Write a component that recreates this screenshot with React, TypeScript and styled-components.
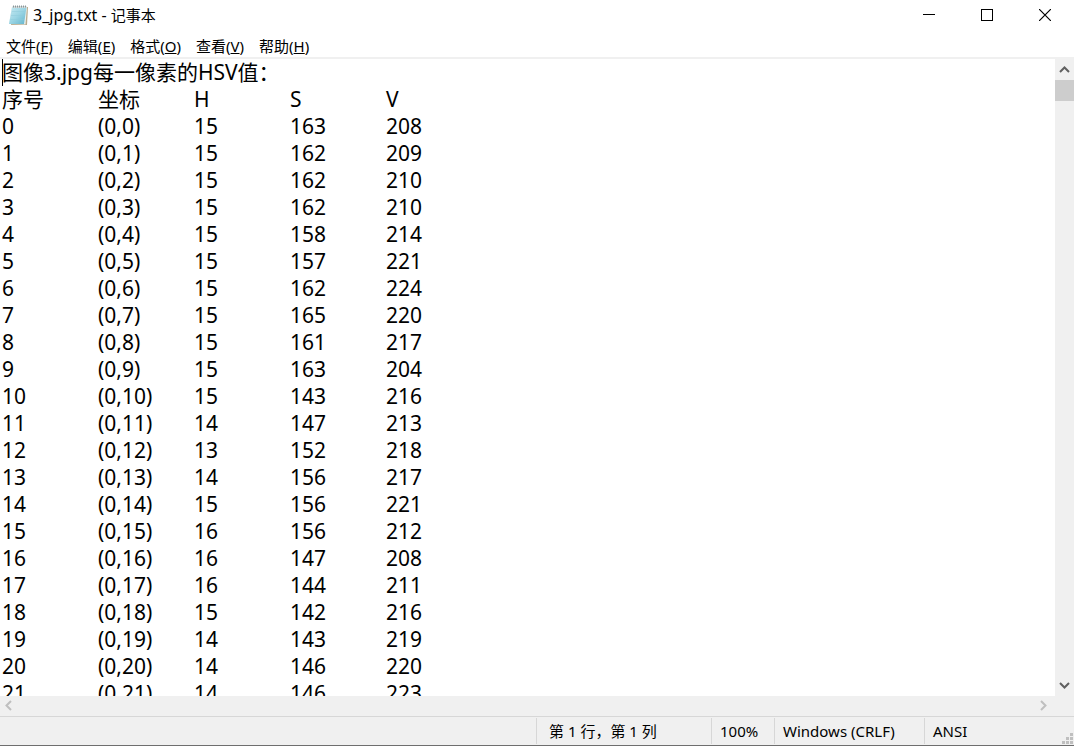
import React from "react";
import styled, { createGlobalStyle } from "styled-components";

const GlobalStyle = createGlobalStyle`
  * { box-sizing: border-box; }
  body {
    margin: 0;
    background: #fff;
    color: #000;
    font-family: "Noto Sans", "Noto Sans CJK SC", sans-serif;
    font-size: 15px;
  }
`;

const Window = styled.main`
  display: flex;
  flex-direction: column;
  height: 100vh;
  overflow: hidden;
  border-bottom: 1px solid #6e6e6e;
`;

const TitleBar = styled.header`
  display: flex;
  align-items: center;
  height: 29px;
  padding-left: 8px;
`;

const Title = styled.h1`
  flex: 1;
  margin: 0 0 0 4px;
  padding-top: 2px;
  font-size: 15px;
  font-weight: 400;
  line-height: 27px;
`;

const FileName = styled.span`
  font-size: 16px;
`;

const CaptionButton = styled.button`
  display: flex;
  align-items: center;
  justify-content: center;
  width: 58px;
  height: 29px;
  padding: 0;
  border: 0;
  background: transparent;
`;

const MenuBar = styled.nav`
  display: flex;
  height: 30px;
  padding-left: 6px;
  gap: 15px;
  border-bottom: 2px solid #f0f0f0;
`;

const MenuButton = styled.button`
  padding: 3px 0 0;
  border: 0;
  background: transparent;
  color: inherit;
  font: inherit;
  line-height: 28px;
  height: 28px;
  white-space: nowrap;
`;

const Middle = styled.div`
  display: flex;
  flex: 1;
  min-height: 0;
`;

const Editor = styled.div`
  position: relative;
  flex: 1;
  min-width: 0;
`;

const Caret = styled.span`
  position: absolute;
  left: 2px;
  top: 0;
  width: 1px;
  height: 27px;
  background: #000;
`;

const TextBox = styled.textarea`
  display: block;
  width: 100%;
  height: 100%;
  padding: 0 0 0 2px;
  border: 0;
  outline: 0;
  resize: none;
  overflow: hidden;
  white-space: pre;
  background: #fff;
  color: #000;
  font-family: inherit;
  font-size: 21px;
  line-height: 27px;
  tab-size: 96px;
`;

const VerticalBar = styled.div`
  display: flex;
  flex-direction: column;
  width: 19px;
  background: #f0f0f0;
`;

const HorizontalBar = styled.div`
  display: flex;
  justify-content: space-between;
  height: 20px;
  padding-right: 22px;
  background: #f0f0f0;
`;

const ArrowButton = styled.button<{ $muted?: boolean }>`
  display: flex;
  align-items: center;
  justify-content: center;
  width: ${(p) => (p.$muted ? 17 : 19)}px;
  height: ${(p) => (p.$muted ? 19 : 21)}px;
  padding: 0;
  border: 0;
  background: transparent;
  color: ${(p) => (p.$muted ? "#bfbfbf" : "#606060")};
`;

const Track = styled.div`
  flex: 1;
`;

const Thumb = styled.div`
  height: 21px;
  background: #cdcdcd;
`;

const StatusBar = styled.footer`
  position: relative;
  display: flex;
  height: 29px;
  padding: 1px 0;
  border-top: 1px solid #d7d7d7;
  background: #f0f0f0;
`;

const StatusSpacer = styled.div`
  flex: 1;
`;

const StatusCell = styled.div<{ $width: number; $inset?: number }>`
  width: ${(p) => p.$width}px;
  padding-left: ${(p) => p.$inset ?? 8}px;
  border-left: 1px solid #d7d7d7;
  line-height: 27px;
  white-space: nowrap;
`;

const Grip = styled.svg`
  position: absolute;
  right: 1px;
  bottom: 1px;
`;

const hsv = [
  [15, 163, 208], [15, 162, 209], [15, 162, 210], [15, 162, 210], [15, 158, 214],
  [15, 157, 221], [15, 162, 224], [15, 165, 220], [15, 161, 217], [15, 163, 204],
  [15, 143, 216], [14, 147, 213], [13, 152, 218], [14, 156, 217], [15, 156, 221],
  [16, 156, 212], [16, 147, 208], [16, 144, 211], [15, 142, 216], [14, 143, 219],
  [14, 146, 220], [14, 146, 223],
];

const text = [
  "图像3.jpg每一像素的HSV值：",
  "序号\t坐标\tH\tS\tV",
  ...hsv.map((row, i) => [i, `(0,${i})`, ...row].join("\t")),
].join("\n");

const menus = [
  ["文件", "F"],
  ["编辑", "E"],
  ["格式", "O"],
  ["查看", "V"],
  ["帮助", "H"],
];

const arrows = {
  up: "M1 8 L5.5 3.5 L10 8",
  down: "M1 3 L5.5 7.5 L10 3",
  left: "M8 1 L3.5 5.5 L8 10",
  right: "M3 1 L7.5 5.5 L3 10",
};

function Arrow({ to }: { to: keyof typeof arrows }) {
  return (
    <svg width="11" height="11" viewBox="0 0 11 11" fill="none" stroke="currentColor" strokeWidth="2" aria-hidden="true">
      <path d={arrows[to]} />
    </svg>
  );
}

function NotepadIcon() {
  return (
    <svg width="21" height="22" viewBox="0 0 21 22" aria-hidden="true">
      <defs>
        <linearGradient id="page" x1="0" y1="0" x2="1" y2="1">
          <stop offset="0" stopColor="#c9eaf2" />
          <stop offset="0.5" stopColor="#9bd5e4" />
          <stop offset="1" stopColor="#62b4cc" />
        </linearGradient>
      </defs>
      <path d="M5 3 L20 3 L19 21 L3 21 Z" fill="#b9aa8c" />
      <path d="M4 3 L19 3 L17.500 20.500 L1 20 Z" fill="#e6efef" />
      <path d="M4 3 L18.500 3 L16 20 L1 20 Z" fill="url(#page)" />
      <path d="M4 7.500 H17 M3 11.500 H16.500 M2.500 15.500 H16" stroke="#8fcbdb" strokeWidth="0.500" />
      <path d="M4.500 3 H18.500" stroke="#d6dcdc" strokeWidth="2" />
      <path d="M5.500 1.500 V3.500 M7.500 1.500 V3.500 M9.500 1.500 V3.500 M11.500 1.500 V3.500 M13.500 1.500 V3.500 M15.500 1.500 V3.500 M17.500 1.500 V3.500" stroke="#7f8d91" strokeWidth="0.900" />
    </svg>
  );
}

export default function App() {
  return (
    <>
      <GlobalStyle />
      <Window>
        <TitleBar>
          <NotepadIcon />
          <Title><FileName>3_jpg.txt - </FileName>记事本</Title>
          <CaptionButton aria-label="最小化">
            <svg width="12" height="12"><path d="M0 5.500 H12" stroke="#000" /></svg>
          </CaptionButton>
          <CaptionButton aria-label="最大化">
            <svg width="12" height="12"><rect x="0.500" y="0.500" width="11" height="11" fill="none" stroke="#000" /></svg>
          </CaptionButton>
          <CaptionButton aria-label="关闭">
            <svg width="12" height="12"><path d="M0 0 L12 12 M12 0 L0 12" stroke="#000" strokeWidth="1.200" /></svg>
          </CaptionButton>
        </TitleBar>
        <MenuBar>
          {menus.map(([label, key]) => (
            <MenuButton key={key}>
              {label}(<u>{key}</u>)
            </MenuButton>
          ))}
        </MenuBar>
        <Middle>
          <Editor>
            <TextBox aria-label="文本编辑器" defaultValue={text} spellCheck={false} wrap="off" />
            <Caret />
          </Editor>
          <VerticalBar>
            <ArrowButton aria-label="向上滚动"><Arrow to="up" /></ArrowButton>
            <Track><Thumb /></Track>
            <ArrowButton aria-label="向下滚动"><Arrow to="down" /></ArrowButton>
          </VerticalBar>
        </Middle>
        <HorizontalBar>
          <ArrowButton $muted aria-label="向左滚动"><Arrow to="left" /></ArrowButton>
          <ArrowButton $muted aria-label="向右滚动"><Arrow to="right" /></ArrowButton>
        </HorizontalBar>
        <StatusBar>
          <StatusSpacer />
          <StatusCell $width={175} $inset={12}>第 1 行，第 1 列</StatusCell>
          <StatusCell $width={63}>100%</StatusCell>
          <StatusCell $width={150}>Windows (CRLF)</StatusCell>
          <StatusCell $width={150}>ANSI</StatusCell>
          <Grip width="11" height="11" fill="#bfbfbf" aria-hidden="true">
            <path d="M8 0h3v3h-3z M4 4h3v3h-3z M8 4h3v3h-3z M0 8h3v3h-3z M4 8h3v3h-3z M8 8h3v3h-3z" />
          </Grip>
        </StatusBar>
      </Window>
    </>
  );
}
